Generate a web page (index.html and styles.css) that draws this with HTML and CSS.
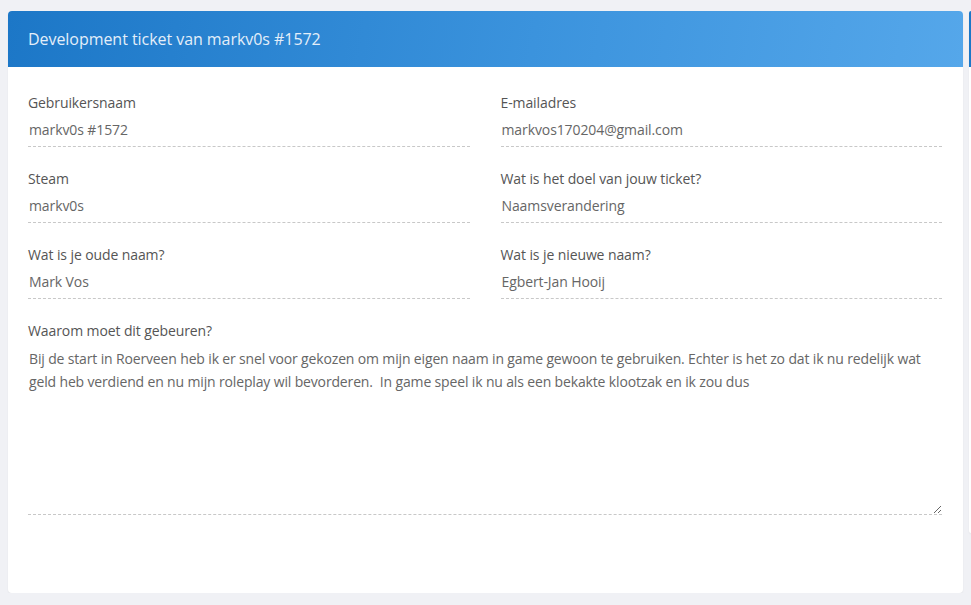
FILE: index.html
```html
<!DOCTYPE html>
<html lang="nl">
<head>
<meta charset="utf-8">
<title>Development ticket</title>
<link rel="stylesheet" href="styles.css">
</head>
<body>
<div class="page">
  <div class="card">
    <div class="card-header">Development ticket van markv0s #1572</div>
    <div class="card-body">
      <div class="grid">
        <div class="field">
          <div class="label">Gebruikersnaam</div>
          <div class="value">markv0s #1572</div>
        </div>
        <div class="field">
          <div class="label">E-mailadres</div>
          <div class="value">markvos170204@gmail.com</div>
        </div>
        <div class="field">
          <div class="label">Steam</div>
          <div class="value">markv0s</div>
        </div>
        <div class="field">
          <div class="label">Wat is het doel van jouw ticket?</div>
          <div class="value">Naamsverandering</div>
        </div>
        <div class="field">
          <div class="label">Wat is je oude naam?</div>
          <div class="value">Mark Vos</div>
        </div>
        <div class="field">
          <div class="label">Wat is je nieuwe naam?</div>
          <div class="value">Egbert-Jan Hooij</div>
        </div>
      </div>
      <div class="field full">
        <div class="label">Waarom moet dit gebeuren?</div>
        <textarea class="area" readonly>Bij de start in Roerveen heb ik er snel voor gekozen om mijn eigen naam in game gewoon te gebruiken. Echter is het zo dat ik nu redelijk wat geld heb verdiend en nu mijn roleplay wil bevorderen.  In game speel ik nu als een bekakte klootzak en ik zou dus</textarea>
      </div>
    </div>
  </div>
  <div class="card side">
    <div class="card-header side-header"></div>
    <div class="side-body"></div>
  </div>
</div>
</body>
</html>
```
FILE: styles.css
```css
html, body {
  margin: 0;
  padding: 0;
  background: #f0f1f5;
  font-family: "Open Sans", "Noto Sans", sans-serif;
  overflow: hidden;
}
.page {
  display: flex;
  gap: 6px;
  padding: 11px 0 0 8px;
  width: 971px;
  box-sizing: border-box;
  overflow: hidden;
}
.card {
  width: 955px;
  flex: none;
  background: #fff;
  border-radius: 4px;
  box-shadow: 0 1px 2px rgba(0, 0, 0, 0.06);
  overflow: hidden;
  height: 582px;
  box-sizing: border-box;
}
.card-header {
  height: 56px;
  background: linear-gradient(100deg, #1c77c7 0%, #3b93dd 55%, #55a7ea 100%);
  color: #e3eef9;
  font-size: 16px;
  font-weight: 500;
  display: flex;
  align-items: center;
  padding: 0 20px;
  letter-spacing: -0.05px;
}
.card-body {
  padding: 26px 21px 0 20px;
}
.grid {
  display: grid;
  grid-template-columns: 1fr 1fr;
  column-gap: 31px;
  row-gap: 22px;
}
.label {
  font-size: 14px;
  line-height: 20px;
  color: #555;
  letter-spacing: -0.1px;
}
.value {
  margin-top: 7px;
  font-size: 14px;
  line-height: 20px;
  color: #666;
  padding: 0 1px 6px;
  border-bottom: 1px dashed #c8c8c8;
  letter-spacing: -0.1px;
}
.full {
  margin-top: 22px;
}
.area {
  display: block;
  width: 100%;
  box-sizing: border-box;
  margin-top: 4px;
  height: 170px;
  border: none;
  border-bottom: 1px dashed #c8c8c8;
  padding: 2px 1px 0;
  font-family: inherit;
  font-size: 14px;
  line-height: 23px;
  color: #666;
  letter-spacing: -0.15px;
  resize: vertical;
  outline: none;
  background: #fff;
}
.side {
  flex: 1 1 0;
  width: auto;
  min-width: 0;
  height: 522px;
  border-radius: 4px 0 0 4px;
}
.side-header {
  background: #1c77c7;
  padding: 0;
}
```
